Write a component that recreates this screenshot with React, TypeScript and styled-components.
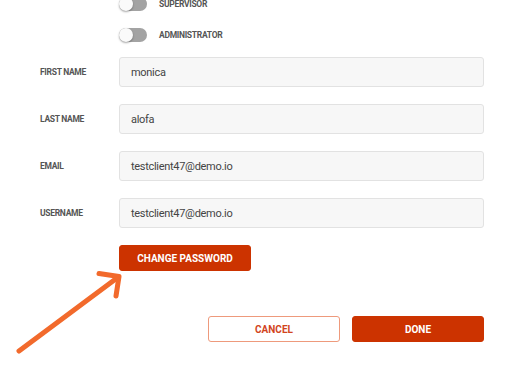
import styled, { createGlobalStyle } from 'styled-components';

const GlobalStyle = createGlobalStyle`
  html, body {
    margin: 0;
    padding: 0;
    background: #ffffff;
    font-family: Roboto, "Liberation Sans", sans-serif;
  }
`;

const roles = ['SUPERVISOR', 'ADMINISTRATOR'];

const fields = [
  { label: 'FIRST NAME', value: 'monica' },
  { label: 'LAST NAME', value: 'alofa' },
  { label: 'EMAIL', value: 'testclient47@demo.io' },
  { label: 'USERNAME', value: 'testclient47@demo.io' },
];

function App() {
  return (
    <>
      <GlobalStyle />
      <Page>
        <ToggleList>
          {roles.map((role) => (
            <ToggleRow key={role}>
              <Switch>
                <Knob />
              </Switch>
              <ToggleLabel>{role}</ToggleLabel>
            </ToggleRow>
          ))}
        </ToggleList>

        <Form>
          {fields.map((f) => (
            <FieldRow key={f.label}>
              <Label>{f.label}</Label>
              <Input>{f.value}</Input>
            </FieldRow>
          ))}
        </Form>

        <PasswordWrap>
          <Button $variant="solid">CHANGE PASSWORD</Button>
        </PasswordWrap>

        <Actions>
          <Button $variant="outline">CANCEL</Button>
          <Button $variant="solid">DONE</Button>
        </Actions>
      </Page>

      <Arrow width="525" height="368" viewBox="0 0 525 368">
        <line x1="19" y1="351" x2="117" y2="278" />
        <polyline points="99,273.5 119,276.5 116,296" />
      </Arrow>
    </>
  );
}

export default App;

const Page = styled.div`
  width: 444px;
  padding-left: 40px;
  height: 368px;
  overflow: hidden;
`;

const ToggleList = styled.div`
  display: flex;
  flex-direction: column;
  gap: 17px;
  margin-top: -3px;
  margin-left: 79px;
`;

const ToggleRow = styled.div`
  display: flex;
  align-items: center;
  gap: 12px;
  height: 14px;
`;

const Switch = styled.div`
  position: relative;
  width: 28px;
  height: 14px;
  border-radius: 7px;
  background: #a3a3a3;
`;

const Knob = styled.div`
  position: absolute;
  left: 0;
  top: 0;
  width: 14px;
  height: 14px;
  border-radius: 50%;
  background: #fafafa;
  box-shadow: 0 1px 2px rgba(0, 0, 0, 0.35);
`;

const ToggleLabel = styled.span`
  font-size: 8.5px;
  font-weight: 700;
  letter-spacing: -0.3px;
  color: #555555;
`;

const Form = styled.div`
  display: flex;
  flex-direction: column;
  gap: 17px;
  margin-top: 15px;
`;

const FieldRow = styled.div`
  display: grid;
  grid-template-columns: 79px 365px;
  align-items: center;
`;

const Label = styled.div`
  font-size: 8.5px;
  font-weight: 700;
  letter-spacing: -0.3px;
  color: #555555;
`;

const Input = styled.div`
  box-sizing: border-box;
  height: 30px;
  padding: 0 11px;
  display: flex;
  align-items: center;
  background: #f7f7f7;
  border: 1px solid #e2e2e2;
  border-radius: 3px;
  font-size: 11px;
  letter-spacing: -0.3px;
  color: #444444;
`;

const PasswordWrap = styled.div`
  margin-top: 17px;
  margin-left: 79px;
`;

const Actions = styled.div`
  display: flex;
  justify-content: flex-end;
  gap: 12px;
  margin-top: 45px;
`;

const Button = styled.div<{ $variant: 'solid' | 'outline' }>`
  box-sizing: border-box;
  width: 132px;
  height: 26px;
  display: flex;
  align-items: center;
  justify-content: center;
  border-radius: 3px;
  font-size: 10px;
  font-weight: 700;
  background: ${({ $variant }) => ($variant === 'solid' ? '#cc3300' : '#ffffff')};
  color: ${({ $variant }) => ($variant === 'solid' ? '#ffffff' : '#d2451e')};
  border: 1px solid
    ${({ $variant }) => ($variant === 'solid' ? '#cc3300' : '#ee9a7c')};
`;

const Arrow = styled.svg`
  position: absolute;
  left: 0;
  top: 0;
  pointer-events: none;
  fill: none;
  stroke: #f26a2c;
  stroke-width: 5;
  stroke-linecap: round;
  stroke-linejoin: round;
`;
